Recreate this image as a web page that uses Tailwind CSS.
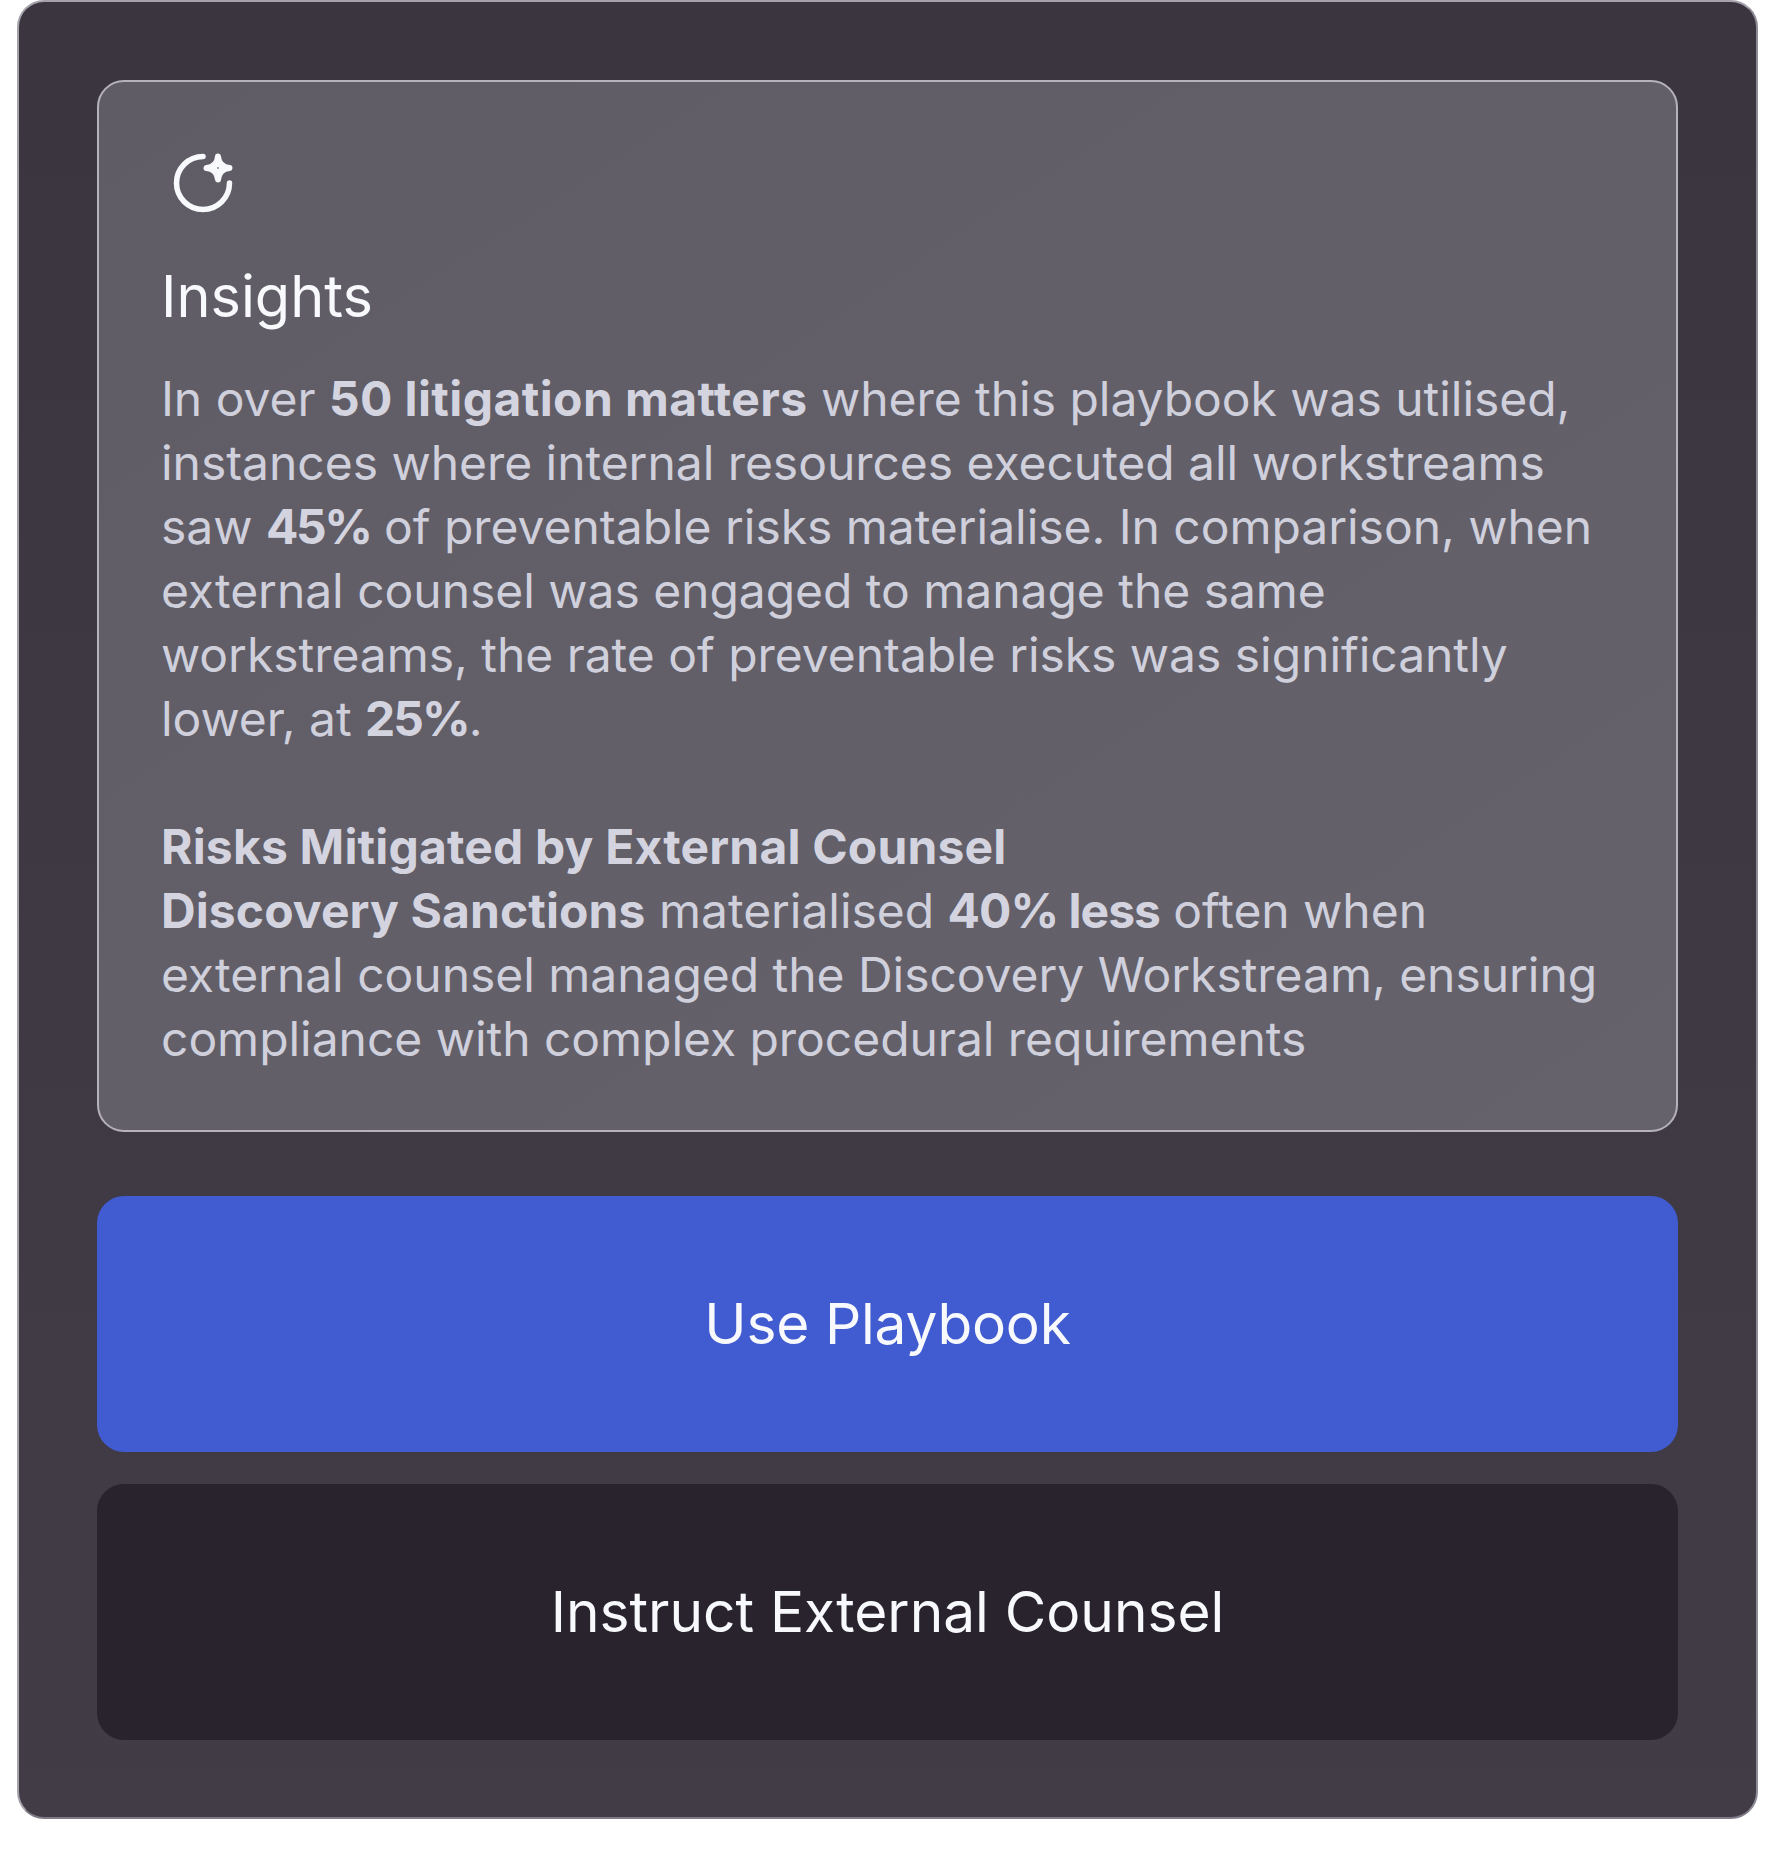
<!DOCTYPE html>
<html lang="en">
<head>
<meta charset="utf-8">
<script src="https://cdn.jsdelivr.net/npm/@tailwindcss/browser@4"></script>
<title>Insights</title>
</head>
<body class="bg-white font-['Inter',sans-serif]">
<div class="w-[1773px] h-[1852px] pl-[17px]">
  <div class="w-[1741px] h-[1819px] rounded-[27px] border-2 border-t-[#a5a2ab] border-l-[#a5a2ab] border-r-[#8f8c96] border-b-[#7f7b86] bg-linear-to-b from-[#3b3540] to-[#413c46] px-[78px] pt-[78px]">
    <section class="h-[1052px] rounded-[27px] border-2 border-[#b5b3b9] bg-linear-to-br from-[#5f5c66] to-[#65626c] pl-[62px] pr-[60px] pt-[69px]">
      <svg class="block ml-[10px] w-[64px] h-[64px]" viewBox="0 0 64 64" fill="none" aria-hidden="true">
        <path d="M32 5.5A26.5 26.5 0 1 0 58.5 32" stroke="#f8f9fd" stroke-width="5.5" stroke-linecap="round"/>
        <path d="M47 5.5Q48 16 58.5 17Q48 18 47 28.5Q46 18 35.5 17Q46 16 47 5.5Z" fill="#f8f9fd" stroke="#f8f9fd" stroke-width="6" stroke-linejoin="round"/>
        <circle cx="47" cy="17" r="1" fill="#8a8890"/>
      </svg>
      <h2 class="mt-[47px] text-[57.6px] leading-[68px] font-normal text-[#f8f9fd]">Insights</h2>
      <div class="mt-[37px] text-[48px] leading-[64px] tracking-[-0.04px] text-[#cfd0dc]">
        <p>In over <b class="font-bold tracking-[0.4px] text-[#d3d4df]">50 litigation matters</b> where this playbook was utilised, instances where internal resources executed all workstreams saw <b class="font-bold tracking-[-2.4px] text-[#d3d4df]">45%</b> of preventable risks materialise. In comparison, when external counsel was engaged to manage the same workstreams, the rate of preventable risks was significantly lower, at <b class="font-bold tracking-[-2px] text-[#d3d4df]">25%</b>.</p>
        <p class="mt-[64px]"><b class="font-bold tracking-[0.17px] text-[#d3d4df]">Risks Mitigated by External Counsel</b><br><b class="font-bold tracking-[0.1px] text-[#d3d4df]">Discovery Sanctions</b> materialised <b class="font-bold tracking-[-1px] text-[#d3d4df]">40% less</b> often when external counsel managed the Discovery Workstream, ensuring compliance with complex procedural requirements</p>
      </div>
    </section>
    <button class="mt-[64px] flex w-full h-[256px] items-center justify-center rounded-[27px] bg-[#415bd0] text-[56.8px] tracking-[-0.2px] text-[#f8f9fd]">Use Playbook</button>
    <button class="mt-[32px] flex w-full h-[256px] items-center justify-center rounded-[27px] bg-[#29232e] text-[56.8px] text-[#f8f9fd]">Instruct External Counsel</button>
  </div>
</div>
</body>
</html>
